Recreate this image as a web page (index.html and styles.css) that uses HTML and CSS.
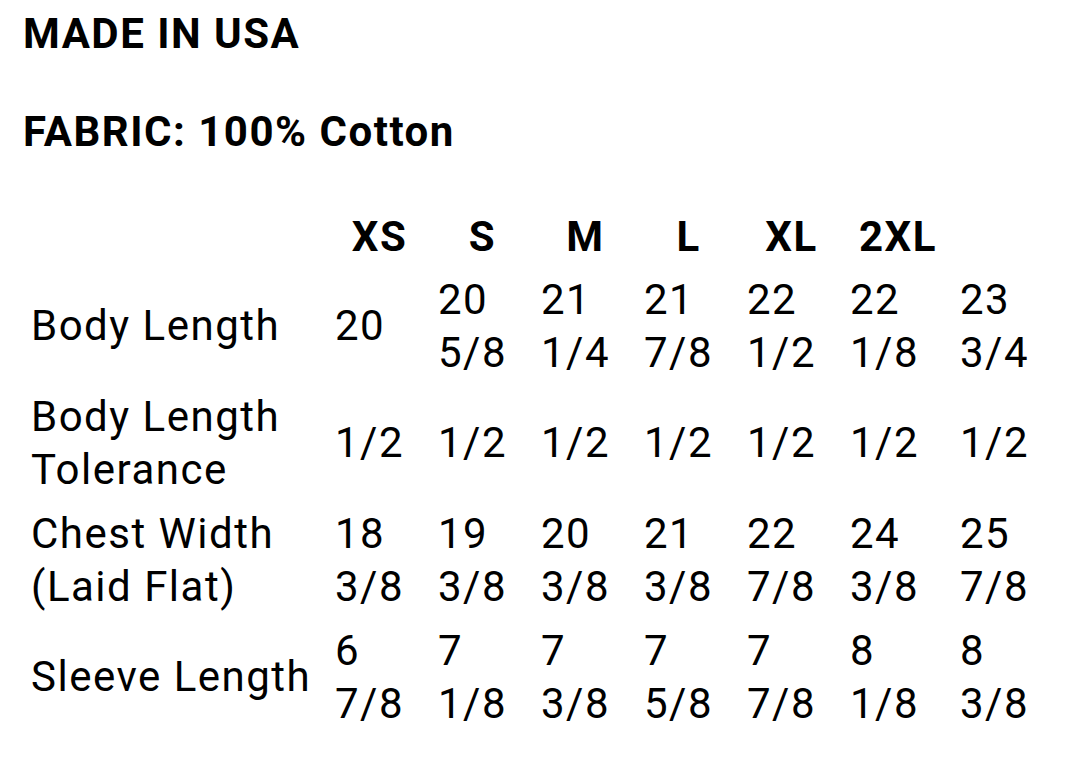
FILE: index.html
```html
<!DOCTYPE html>
<html lang="en">
<head>
<meta charset="utf-8">
<title>Size chart</title>
<link rel="stylesheet" href="styles.css">
</head>
<body>
<main class="page">
  <p class="heading">MADE IN USA</p>
  <p class="heading">FABRIC: 100% Cotton</p>
  <table class="chart">
    <colgroup>
      <col class="col-label">
      <col class="col-size">
      <col class="col-size">
      <col class="col-size">
      <col class="col-size">
      <col class="col-size">
      <col class="col-wide">
      <col class="col-last">
    </colgroup>
    <thead>
      <tr>
        <th></th>
        <th>XS</th>
        <th>S</th>
        <th>M</th>
        <th>L</th>
        <th>XL</th>
        <th>2XL</th>
      </tr>
    </thead>
    <tbody>
      <tr>
        <td>Body Length</td>
        <td>20</td>
        <td>20 5/8</td>
        <td>21 1/4</td>
        <td>21 7/8</td>
        <td>22 1/2</td>
        <td>22 1/8</td>
        <td>23 3/4</td>
      </tr>
      <tr>
        <td>Body Length Tolerance</td>
        <td>1/2</td>
        <td>1/2</td>
        <td>1/2</td>
        <td>1/2</td>
        <td>1/2</td>
        <td>1/2</td>
        <td>1/2</td>
      </tr>
      <tr>
        <td>Chest Width (Laid Flat)</td>
        <td>18 3/8</td>
        <td>19 3/8</td>
        <td>20 3/8</td>
        <td>21 3/8</td>
        <td>22 7/8</td>
        <td>24 3/8</td>
        <td>25 7/8</td>
      </tr>
      <tr>
        <td>Sleeve Length</td>
        <td>6 7/8</td>
        <td>7 1/8</td>
        <td>7 3/8</td>
        <td>7 5/8</td>
        <td>7 7/8</td>
        <td>8 1/8</td>
        <td>8 3/8</td>
      </tr>
    </tbody>
  </table>
</main>
</body>
</html>
```

FILE: styles.css
```css
html, body {
  margin: 0;
  padding: 0;
  background: #ffffff;
}

body {
  font-family: Roboto, "Noto Sans", "Liberation Sans", sans-serif;
  color: #000000;
  font-size: 42px;
  line-height: 53px;
  letter-spacing: 1.5px;
}

.page {
  padding: 7px 24px 0 23px;
}

.heading {
  margin: 0 0 45px 0;
  font-weight: 700;
}

.chart {
  table-layout: fixed;
  border-collapse: separate;
  border-spacing: 2px;
  width: 1035px;
  margin-left: 0;
}

.col-label { width: 302px; }
.col-size { width: 101px; }
.col-wide { width: 108px; }
.col-last { width: 102px; }

.chart th,
.chart td {
  vertical-align: middle;
  font-size: 42px;
  line-height: 53px;
}

.chart th {
  padding: 5px 6px 3px 6px;
  font-weight: 700;
  text-align: center;
}

.chart td {
  padding: 4.5px 6px;
  font-weight: 400;
  text-align: left;
}
```
